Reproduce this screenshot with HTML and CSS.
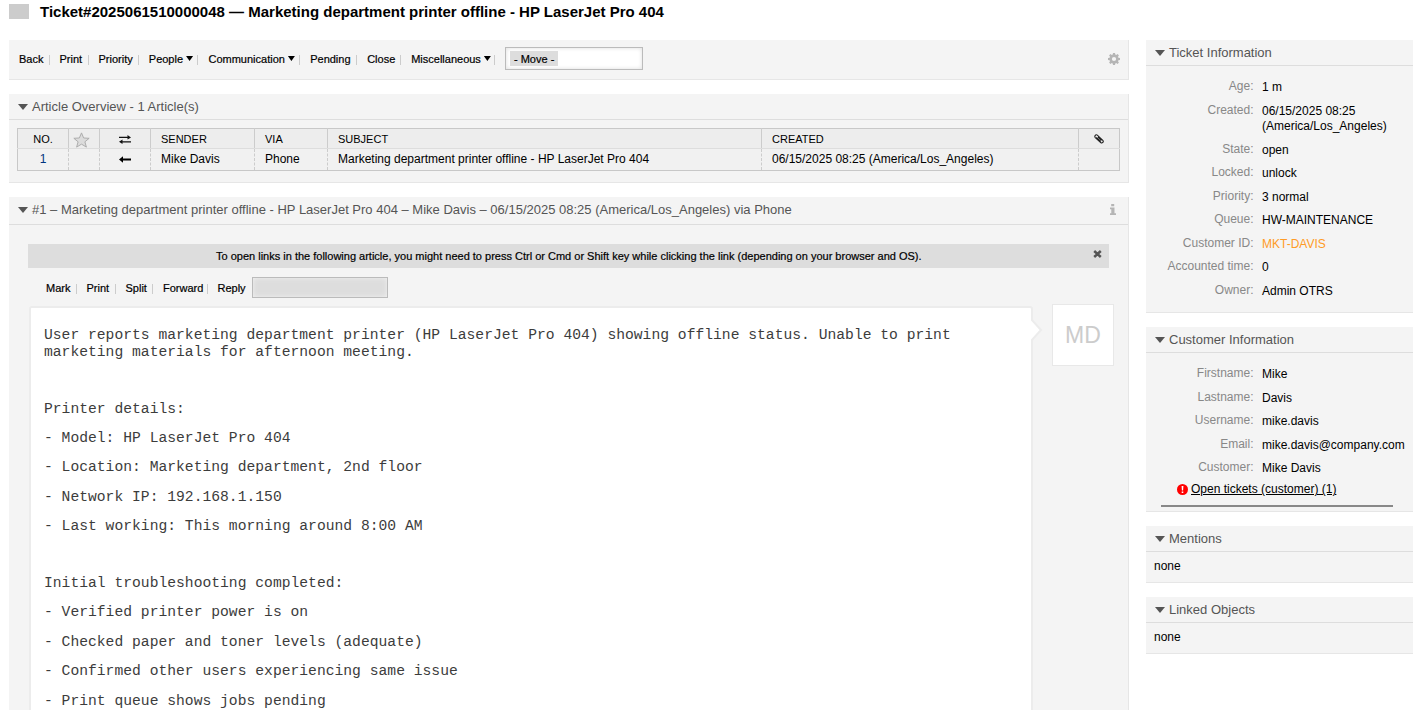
FILE: index.html
```html
<!DOCTYPE html>
<html lang="en">
<head>
<meta charset="utf-8">
<title>Ticket#2025061510000048</title>
<link rel="stylesheet" href="styles.css">
</head>
<body>
<header class="headline"><span class="flag"></span><h1>Ticket#2025061510000048 — Marketing department printer offline - HP LaserJet Pro 404</h1></header>
<div class="columns">
<main class="content">
  <nav class="panel toolbar">
    <ul class="actions">
      <li class="w-back">Back</li><li class="w-print">Print</li><li class="w-priority">Priority</li><li class="w-people">People<i class="caret"></i></li><li class="w-comm">Communication<i class="caret"></i></li><li class="w-pending">Pending</li><li class="w-close">Close</li><li class="w-misc">Miscellaneous<i class="caret"></i></li>
    </ul>
    <div class="select move"><span>- Move -</span></div>
    <svg class="gear" width="12" height="12" viewBox="0 0 12 12"><path fill="#b5b5b5" fill-rule="evenodd" d="M5 0h2l.3 1.600.9.4L9.600 1.100 10.900 2.400 10 3.800l.4.9L12 5v2l-1.600.3-.4.9.9 1.400-1.300 1.300L8.200 10l-.9.4L7 12H5l-.3-1.600-.9-.4-1.400.9L1.100 9.600 2 8.200l-.4-.9L0 7V5l1.600-.3.4-.9-.9-1.400L2.400 1.100 3.800 2l.9-.4zM6 3.900a2.100 2.100 0 1 0 0 4.200 2.100 2.100 0 0 0 0-4.200z"/></svg>
  </nav>

  <section class="panel overview">
    <h2><i class="toggle"></i>Article Overview - 1 Article(s)</h2>
    <table>
      <colgroup><col class="c1"><col class="c2"><col class="c3"><col class="c4"><col class="c5"><col class="c6"><col class="c7"><col class="c8"></colgroup>
      <thead><tr>
        <th class="mid">NO.</th>
        <th class="icon star"><svg width="17" height="16" viewBox="0 0 16 15"><path d="M8 .8l2 4.800 5.200.3-4 3.300 1.400 5L8 11.400l-4.600 2.800 1.400-5-4-3.300L6 5.600z" fill="#dcdcdc" stroke="#aaa" stroke-width=".9"/></svg></th>
        <th class="icon"><svg width="12" height="9" viewBox="0 0 12 9"><path d="M0 1.700h8.500V0L12 2.400 8.500 4.500V3H0zM12 7.500H3.500V9L0 6.700l3.500-2.200v1.700H12z" fill="#111"/></svg></th>
        <th>SENDER</th><th>VIA</th><th>SUBJECT</th><th>CREATED</th>
        <th class="icon"><svg width="10" height="10" viewBox="0 0 10 10"><path d="M6.700 7.500L2.300 3.400M3.300 1.200L8.800 6.300c1.300 1.500-.6 3.500-2.100 2.200L1.300 3.600C0 2.100 1.900-.1 3.300 1.200M4 3L7.500 6.300" fill="none" stroke="#222" stroke-width="1.100"/></svg></th>
      </tr></thead>
      <tbody><tr>
        <td class="mid num">1</td><td></td>
        <td class="icon"><svg width="12" height="7" viewBox="0 0 12 7"><path d="M0 3.500L4 .3v2.300h8v1.800H4v2.300z" fill="#000"/></svg></td>
        <td>Mike Davis</td><td>Phone</td><td>Marketing department printer offline - HP LaserJet Pro 404</td><td>06/15/2025 08:25 (America/Los_Angeles)</td><td></td>
      </tr></tbody>
    </table>
  </section>

  <section class="panel article">
    <h2><i class="toggle"></i>#1 – Marketing department printer offline - HP LaserJet Pro 404 – Mike Davis – 06/15/2025 08:25 (America/Los_Angeles) via Phone
      <svg class="info" width="6" height="11" viewBox="0 0 6 11"><path fill="#b5b5b5" d="M1.200 0h3v2.300h-3zM0 3.500h4.500v5.800H6V11H0V9.300h1.300V5.200H0z"/></svg></h2>
    <div class="hint"><span>To open links in the following article, you might need to press Ctrl or Cmd or Shift key while clicking the link (depending on your browser and OS).</span>
      <svg class="dismiss" width="9" height="8" viewBox="0 0 9 8"><path d="M1.200 1l6.600 6M7.800 1L1.200 7" stroke="#555" stroke-width="2.500"/></svg></div>
    <div class="article-bar">
      <ul class="actions"><li class="w-mark">Mark</li><li class="w-print2">Print</li><li class="w-split">Split</li><li class="w-forward">Forward</li><li class="w-reply">Reply</li></ul>
      <div class="select disabled"></div>
    </div>
    <div class="thread">
      <div class="message">
        <svg class="tail" width="12" height="24" viewBox="0 0 12 24"><path d="M0 1L10 12 0 23" fill="#fff" stroke="#ececec" stroke-width="2"/></svg>
        <p>User reports marketing department printer (HP LaserJet Pro 404) showing offline status. Unable to print<br>marketing materials for afternoon meeting.</p>
        <p class="gap">Printer details:</p>
        <p>- Model: HP LaserJet Pro 404</p>
        <p>- Location: Marketing department, 2nd floor</p>
        <p>- Network IP: 192.168.1.150</p>
        <p>- Last working: This morning around 8:00 AM</p>
        <p class="gap">Initial troubleshooting completed:</p>
        <p>- Verified printer power is on</p>
        <p>- Checked paper and toner levels (adequate)</p>
        <p>- Confirmed other users experiencing same issue</p>
        <p>- Print queue shows jobs pending</p>
      </div>
      <div class="avatar">MD</div>
    </div>
  </section>
</main>

<aside class="sidebar">
  <section class="panel ticket">
    <h2><i class="toggle"></i>Ticket Information</h2>
    <dl>
      <dt>Age:</dt><dd>1 m</dd>
      <dt>Created:</dt><dd>06/15/2025 08:25<br>(America/Los_Angeles)</dd>
      <dt>State:</dt><dd>open</dd>
      <dt>Locked:</dt><dd>unlock</dd>
      <dt>Priority:</dt><dd>3 normal</dd>
      <dt>Queue:</dt><dd>HW-MAINTENANCE</dd>
      <dt>Customer ID:</dt><dd class="link">MKT-DAVIS</dd>
      <dt>Accounted time:</dt><dd>0</dd>
      <dt>Owner:</dt><dd>Admin OTRS</dd>
    </dl>
  </section>
  <section class="panel customer">
    <h2><i class="toggle"></i>Customer Information</h2>
    <dl>
      <dt>Firstname:</dt><dd>Mike</dd>
      <dt>Lastname:</dt><dd>Davis</dd>
      <dt>Username:</dt><dd>mike.davis</dd>
      <dt>Email:</dt><dd>mike.davis@company.com</dd>
      <dt>Customer:</dt><dd>Mike Davis</dd>
    </dl>
    <div class="open-tickets"><svg width="11" height="11" viewBox="0 0 11 11"><circle cx="5.500" cy="5.500" r="5.500" fill="#f00"/><path d="M4.600 1.900h1.800L6.100 6.500H4.900zM4.700 7.400h1.600V9H4.700z" fill="#fff"/></svg><a>Open tickets (customer) (1)</a></div>
    <div class="rule"></div>
  </section>
  <section class="panel small"><h2><i class="toggle"></i>Mentions</h2><p>none</p></section>
  <section class="panel small"><h2><i class="toggle"></i>Linked Objects</h2><p>none</p></section>
</aside>
</div>
</body>
</html>
```
FILE: styles.css
```css
* { box-sizing: border-box; }
html, body { height: 710px; overflow: hidden; }
body { margin: 0; background: #fff; color: #000; font: 12px/16px "Liberation Sans", Arial, sans-serif; }
h1, h2, p, ul, dl, dd { margin: 0; padding: 0; }
.headline { display: flex; height: 40px; padding: 4px 0 0 9px; }
.flag { flex: none; width: 20px; height: 15px; background: #ccc; }
.headline h1 { margin-left: 11px; font-size: 15px; line-height: 16px; white-space: nowrap; }
.columns { display: flex; height: 670px; gap: 17px; padding-left: 9px; }
.content { width: 1120px; flex: none; display: flex; flex-direction: column; gap: 14px; }
.sidebar { width: 267px; flex: none; display: flex; flex-direction: column; gap: 14px; }
.panel { flex: none; background: #f4f4f4; border: solid #e6e6e6; border-width: 0 1px 1px 0; }
.sidebar .panel { border-right: 0; }
.panel h2 { display: flex; align-items: center; height: 26px; padding: 0 12px 0 9px; border-bottom: 1px solid #ddd; font-size: 13px; line-height: 24px; font-weight: normal; color: #555; white-space: nowrap; }
.toggle { width: 10px; height: 6px; margin: 1px 4px 0 0; background: #555; clip-path: polygon(0 0, 100% 0, 50% 100%); }

.toolbar { display: flex; align-items: center; height: 40px; padding: 0 8px 0 10px; }
.actions { display: flex; list-style: none; font-size: 11px; line-height: 14px; white-space: nowrap; }
.actions, .move, .hint { -webkit-text-stroke: .2px #000; }
.toolbar .actions { margin-top: -2px; }
.actions li { display: flex; align-items: center; flex: none; }
.actions li::after { content: ""; width: 1px; height: 10px; margin: 2px 10px 0 auto; background: #ccc; }
.caret { width: 7px; height: 5px; margin-left: 3px; background: #000; clip-path: polygon(0 0, 100% 0, 50% 100%); }
.w-back { width: 40.500px; }
.w-print { width: 39px; }
.w-priority { width: 50.300px; }
.w-people { width: 59.700px; }
.w-comm { width: 101.700px; }
.w-pending { width: 57px; }
.w-close { width: 44px; }
.w-misc { width: 93.800px; }
.select { border: 1px solid #bbb; background: #fff; box-shadow: inset 0 0 4px #ddd; }
.move { width: 138px; height: 23px; margin-top: -2px; padding: 3px 4px; font-size: 11px; }
.move span { display: block; width: 48px; height: 15px; padding-left: 4px; line-height: 16px; background: #ddd; }
.gear { margin-left: auto; margin-top: -1px; }

.overview { height: 89px; }
table { width: 1103px; margin: 8px 0 0 8px; border-collapse: collapse; table-layout: fixed; border: 1px solid #c8c8c8; background: #f1f1f1; }
.c1 { width: 51px; } .c2 { width: 31px; } .c3 { width: 51px; } .c4 { width: 104px; }
.c5 { width: 73px; } .c6 { width: 434px; } .c7 { width: 317px; } .c8 { width: 41px; }
th, td { padding: 0 0 0 10px; text-align: left; white-space: nowrap; }
th { height: 20px; background: #ededed; border-right: 1px solid #ccc; border-bottom: 1px solid #ddd; font-size: 11px; line-height: 18px; font-weight: normal; padding-top: 1px; }
td { height: 22px; border-right: 1px dashed #ccc; line-height: 18px; padding-top: 1px; padding-bottom: 2px; }
td:last-child, th:last-child { border-right-color: #c8c8c8; border-right-style: solid; }
.mid, .icon { padding-left: 0; text-align: center; }
.num { color: #00337f; }
.icon svg { display: block; margin: 0 auto; }
.star svg { margin: 1px 4px 0; }

.article { height: 513px; overflow: hidden; border-bottom: 0; }
.article h2 { height: 28px; padding-bottom: 2px; line-height: 25px; }
.article .toggle, .info { flex: none; }
.info { margin-left: auto; }
.hint { display: flex; align-items: center; width: 1081px; height: 24px; margin: 19px 0 0 19px; padding: 0 7px 0 188px; background: #ddd; font-size: 11px; white-space: nowrap; }
.dismiss { margin: -4px 0 0 auto; }
.article-bar { display: flex; align-items: center; height: 38px; padding: 2px 0 0 37px; }
.article-bar li:last-child::after { display: none; }
.w-mark { width: 40.500px; }
.w-print2 { width: 39px; }
.w-split { width: 37.500px; }
.w-forward { width: 54.500px; }
.w-reply { width: 34.500px; }
.disabled { width: 136px; height: 21px; margin-top: -2px; background: #ddd; box-shadow: inset 0 0 5px #f1f1f1; }
.thread { display: flex; align-items: flex-start; padding-left: 20px; }
.message { position: relative; width: 1004px; height: 404px; padding: 19px 13px 0; border: 2px solid #ececec; border-bottom: 0; border-radius: 3px 3px 0 0; background: #fff; color: #3c3c3c; font: 14.667px/17px "Liberation Mono", "Courier New", monospace; letter-spacing: .008px; }
.message p { height: 17px; margin-bottom: 12.450px; white-space: nowrap; }
.message p:first-of-type { height: 34px; }
.message p:last-child { margin-bottom: 0; }
.message .gap { margin-top: 39.600px; }
.tail { position: absolute; right: -12px; top: 10px; }
.avatar { width: 62px; height: 62px; margin: -2px 0 0 19px; border: 1px solid #e8e8e8; background: #fff; color: #ccc; font-size: 23px; line-height: 61px; text-align: center; }

dl { display: grid; grid-template-columns: 107.500px 1fr; column-gap: 8.500px; row-gap: 8px; line-height: 15.500px; white-space: nowrap; }
dt { text-align: right; color: #888; }
dd { padding-top: 1.200px; margin-bottom: -1.200px; }
.link { color: #ff9b26; }
.ticket { height: 273px; }
.ticket dl, .customer dl { padding-top: 13.100px; }
.customer { height: 185px; }
.open-tickets { display: flex; align-items: center; height: 16px; margin: 5.900px 0 0 30.500px; }
.open-tickets a { margin-left: 3.500px; text-decoration: underline; }
.rule { width: 232px; height: 2px; margin: 8px 0 0 15px; background: #888; }
.small { height: 57px; }
.small p { padding: 6px 8px; }
```
